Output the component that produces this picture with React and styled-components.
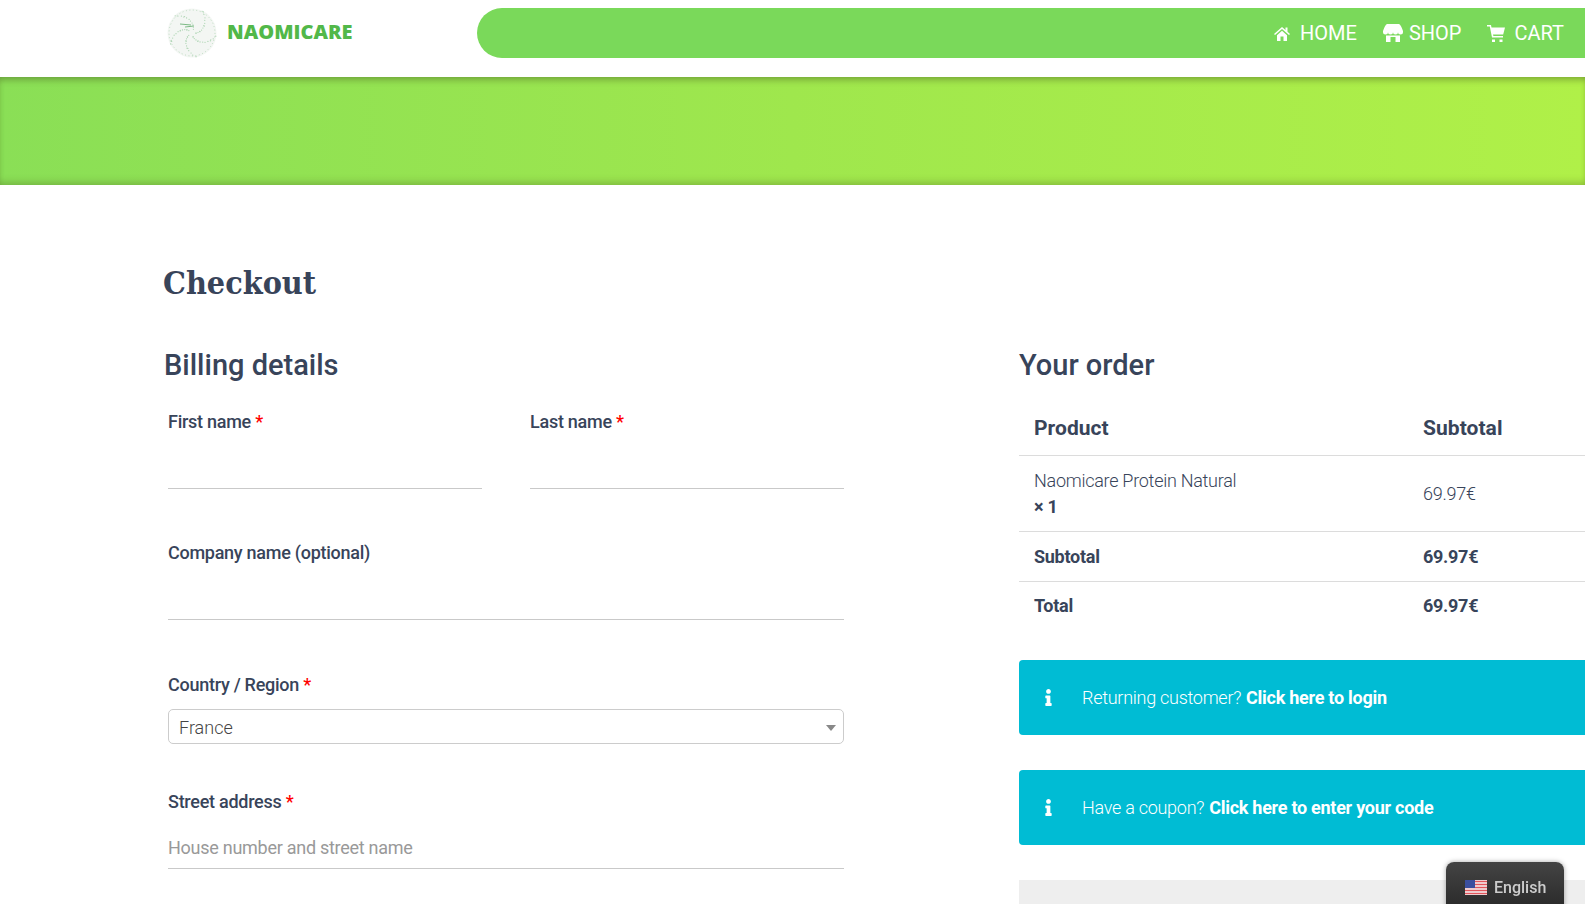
import React from 'react';
import styled, { createGlobalStyle } from 'styled-components';
import { FaInfo } from 'react-icons/fa';

const GlobalStyle = createGlobalStyle`
  html, body {
    margin: 0;
    height: 100%;
    overflow: hidden;
    background: #fff;
    font-family: Roboto, "Liberation Sans", sans-serif;
    color: #38445a;
  }
  * { box-sizing: border-box; }
`;

const Header = styled.header`
  position: relative;
  z-index: 2;
  display: flex;
  height: 77px;
  background: #fff;
`;

const Logo = styled.a`
  display: flex;
  align-items: center;
  gap: 10px;
  width: 477px;
  height: 66px;
  padding-left: 167px;
`;

const LogoText = styled.span`
  margin-top: -4px;
  font-family: "Open Sans", sans-serif;
  font-size: 20px;
  font-weight: 800;
  color: #52b849;
`;

const NavBar = styled.nav`
  flex: 1;
  display: flex;
  justify-content: flex-end;
  align-items: center;
  gap: 26px;
  height: 50px;
  margin-top: 8px;
  padding-right: 21px;
  background: #7ad95a;
  border-radius: 25px 0 0 25px;
`;

const NavItem = styled.a`
  display: flex;
  align-items: center;
  gap: ${(p) => p.$gap}px;
  font-size: 20px;
  color: #fff;
  svg { display: block; }
`;

const Hero = styled.div`
  height: 108px;
  background: linear-gradient(90deg, #8adf56 0%, #9fe74d 50%, #b0f048 100%);
  box-shadow: inset 0 6px 6px -3px rgba(70, 90, 30, 0.45), inset 0 -6px 7px -3px rgba(70, 90, 30, 0.3);
`;

const Main = styled.main`
  padding: 78px 0 0 163px;
  width: 1700px;
`;

const Title = styled.h1`
  margin: 0;
  font-family: "DejaVu Serif Condensed", "DejaVu Serif", serif;
  font-size: 32px;
  line-height: 40px;
  font-weight: 700;
`;

const Columns = styled.div`
  display: grid;
  grid-template-columns: 855px 640px;
  margin-top: 44px;
  margin-left: 1px;
`;

const SectionTitle = styled.h2`
  margin: 0;
  font-size: 29px;
  line-height: 36px;
  font-weight: 500;
`;

const Form = styled.form`
  margin-top: 27px;
  padding-left: 4px;
  width: 680px;
`;

const NameRow = styled.div`
  display: grid;
  grid-template-columns: 314px 314px;
  gap: 48px;
`;

const Field = styled.div`
  margin-top: ${(p) => p.$top || 0}px;
`;

const Label = styled.label`
  display: block;
  font-size: 18px;
  line-height: 24px;
  font-weight: 500;
  letter-spacing: -0.27px;
`;

const Required = styled.span`
  color: #f00;
`;

const TextInput = styled.input`
  display: block;
  width: 100%;
  height: 55px;
  padding: 12px 0 0;
  border: 0;
  border-bottom: 1px solid #c9c9c9;
  outline: 0;
  font: 300 18px Roboto, sans-serif;
  &::placeholder {
    color: #999;
    opacity: 1;
    font-weight: 400;
    letter-spacing: -0.27px;
  }
`;

const SelectBox = styled.div`
  display: flex;
  align-items: center;
  justify-content: space-between;
  height: 35px;
  margin-top: 12px;
  padding: 2px 7px 0 10px;
  border: 1px solid #ccc;
  border-radius: 5px;
  font-size: 18px;
  font-weight: 300;
  color: #444;
`;

const Caret = styled.span`
  width: 0;
  height: 0;
  border-left: 5px solid transparent;
  border-right: 5px solid transparent;
  border-top: 6px solid #888;
`;

const OrderTable = styled.table`
  width: 100%;
  margin-top: 16px;
  border-collapse: collapse;
  table-layout: fixed;
`;

const HeadCell = styled.th`
  width: ${(p) => p.$width || 'auto'};
  height: 56px;
  padding: 3px 0 0 15px;
  border-bottom: 1px solid #dcdcdc;
  font-size: 21px;
  font-weight: 700;
  text-align: left;
  letter-spacing: 0.05px;
`;

const Cell = styled.td`
  height: ${(p) => p.$height}px;
  padding: ${(p) => (p.$last ? 0 : 2)}px 0 0 15px;
  border-bottom: ${(p) => (p.$last ? '0' : '1px solid #dcdcdc')};
  font-size: 18px;
  line-height: 26px;
  font-weight: ${(p) => (p.$bold ? 700 : 300)};
  letter-spacing: -0.27px;
`;

const Qty = styled.strong`
  display: block;
  font-weight: 700;
`;

const Notice = styled.div`
  display: flex;
  align-items: center;
  height: 75px;
  margin-top: ${(p) => p.$top}px;
  padding-left: 21px;
  background: #00bcd4;
  border-radius: 4px 0 0 4px;
  color: #fff;
  font-size: 18px;
  font-weight: 300;
  letter-spacing: -0.27px;
  svg { margin-right: 25px; }
`;

const NoticeLink = styled.a`
  margin-left: 5px;
  font-weight: 700;
`;

const PaymentBox = styled.div`
  height: 200px;
  margin-top: 35px;
  background: #eee;
`;

const LangSwitcher = styled.div`
  position: fixed;
  left: 1446px;
  top: 862px;
  display: flex;
  align-items: center;
  gap: 7px;
  width: 118px;
  height: 60px;
  padding: 0 0 10px 19px;
  border-radius: 8px 8px 0 0;
  background: linear-gradient(180deg, #444 0%, #222 100%);
  box-shadow: 0 0 5px rgba(0, 0, 0, 0.35);
  color: #ccc;
  font-size: 16px;
  font-weight: 500;
`;

const LogoMark = () => {
  const dots = [];
  for (let i = 0; i < 70; i += 1) {
    const a = i * 2.4;
    const r = 4 + (i % 11) * 2;
    dots.push(
      <circle
        key={i}
        cx={25 + r * Math.cos(a)}
        cy={25 + r * Math.sin(a)}
        r="0.6"
        fill="#a9d3af"
      />,
    );
  }
  return (
    <svg width="50" height="50" viewBox="0 0 50 50">
      <circle cx="25" cy="25" r="24.5" fill="#f3f6f3" />
      <circle cx="25" cy="25" r="23" fill="none" stroke="#afd4b4" strokeWidth="0.8" strokeDasharray="1 2.5" />
      <path d="M13 16 L24 17 M18 19 L27 18" stroke="#7dbb86" strokeWidth="1" fill="none" />
      {dots}
    </svg>
  );
};

const HomeIcon = () => (
  <svg width="16" height="15" viewBox="0 0 16 15" fill="#fff">
    <path d="M0 8 L8 1 L11.5 4 V1.5 H13.5 V5.8 L16 8 L15 9 L8 3 L1 9 Z" />
    <path d="M3 9.2 L8 4.8 L13 9.2 V15 H9.5 V10.5 H6.5 V15 H3 Z" />
  </svg>
);

const StoreIcon = () => (
  <svg width="20" height="18" viewBox="0 0 20 18" fill="#fff">
    <path d="M4 0 H16 Q18 1 20 7 V8 A2.5 2.5 0 0 1 15 8 A2.5 2.5 0 0 1 10 8 A2.5 2.5 0 0 1 5 8 A2.5 2.5 0 0 1 0 8 V7 Q2 1 4 0 Z" />
    <path d="M3 11.5 H17 V18 H12.5 V13 H7.5 V18 H3 Z" />
  </svg>
);

const CartIcon = () => (
  <svg width="18" height="17" viewBox="0 0 18 17" fill="#fff">
    <path d="M0 0 H4 L4.5 2.5 H18 L16.2 9.5 H6 L6.4 11 H16 V12.5 H5 L2.8 1.5 H0 Z" />
    <rect x="5" y="14.5" width="3" height="2.5" />
    <rect x="12.5" y="14.5" width="3" height="2.5" />
  </svg>
);

const UsFlag = () => (
  <svg width="22" height="15" viewBox="0 0 22 15">
    <rect width="22" height="15" fill="#f3f3f3" />
    <path d="M0 1.5h22M0 4.5h22M0 7.5h22M0 10.5h22M0 13.5h22" stroke="#e2565c" strokeWidth="1.5" />
    <rect width="10" height="8" fill="#3b4f9e" />
  </svg>
);

const App = () => (
  <>
    <GlobalStyle />
    <Header>
      <Logo>
        <LogoMark />
        <LogoText>NAOMICARE</LogoText>
      </Logo>
      <NavBar>
        <NavItem $gap={10}><HomeIcon />HOME</NavItem>
        <NavItem $gap={6}><StoreIcon />SHOP</NavItem>
        <NavItem $gap={9}><CartIcon />CART</NavItem>
      </NavBar>
    </Header>
    <Hero />
    <Main>
      <Title>Checkout</Title>
      <Columns>
        <section>
          <SectionTitle>Billing details</SectionTitle>
          <Form>
            <NameRow>
              <Field>
                <Label>First name <Required>*</Required></Label>
                <TextInput />
              </Field>
              <Field>
                <Label>Last name <Required>*</Required></Label>
                <TextInput />
              </Field>
            </NameRow>
            <Field $top={52}>
              <Label>Company name (optional)</Label>
              <TextInput />
            </Field>
            <Field $top={53}>
              <Label>Country / Region <Required>*</Required></Label>
              <SelectBox>France<Caret /></SelectBox>
            </Field>
            <Field $top={46}>
              <Label>Street address <Required>*</Required></Label>
              <TextInput placeholder="House number and street name" />
            </Field>
          </Form>
        </section>
        <section>
          <SectionTitle>Your order</SectionTitle>
          <OrderTable>
            <thead>
              <tr>
                <HeadCell $width="389px">Product</HeadCell>
                <HeadCell>Subtotal</HeadCell>
              </tr>
            </thead>
            <tbody>
              <tr>
                <Cell $height={76}>Naomicare Protein Natural<Qty>× 1</Qty></Cell>
                <Cell $height={76}>69.97€</Cell>
              </tr>
              <tr>
                <Cell $height={50} $bold>Subtotal</Cell>
                <Cell $height={50} $bold>69.97€</Cell>
              </tr>
              <tr>
                <Cell $height={49} $bold $last>Total</Cell>
                <Cell $height={49} $bold $last>69.97€</Cell>
              </tr>
            </tbody>
          </OrderTable>
          <Notice $top={30}>
            <FaInfo size={17} />
            Returning customer?<NoticeLink>Click here to login</NoticeLink>
          </Notice>
          <Notice $top={35}>
            <FaInfo size={17} />
            Have a coupon?<NoticeLink>Click here to enter your code</NoticeLink>
          </Notice>
          <PaymentBox />
        </section>
      </Columns>
    </Main>
    <LangSwitcher>
      <UsFlag />
      English
    </LangSwitcher>
  </>
);

export default App;
